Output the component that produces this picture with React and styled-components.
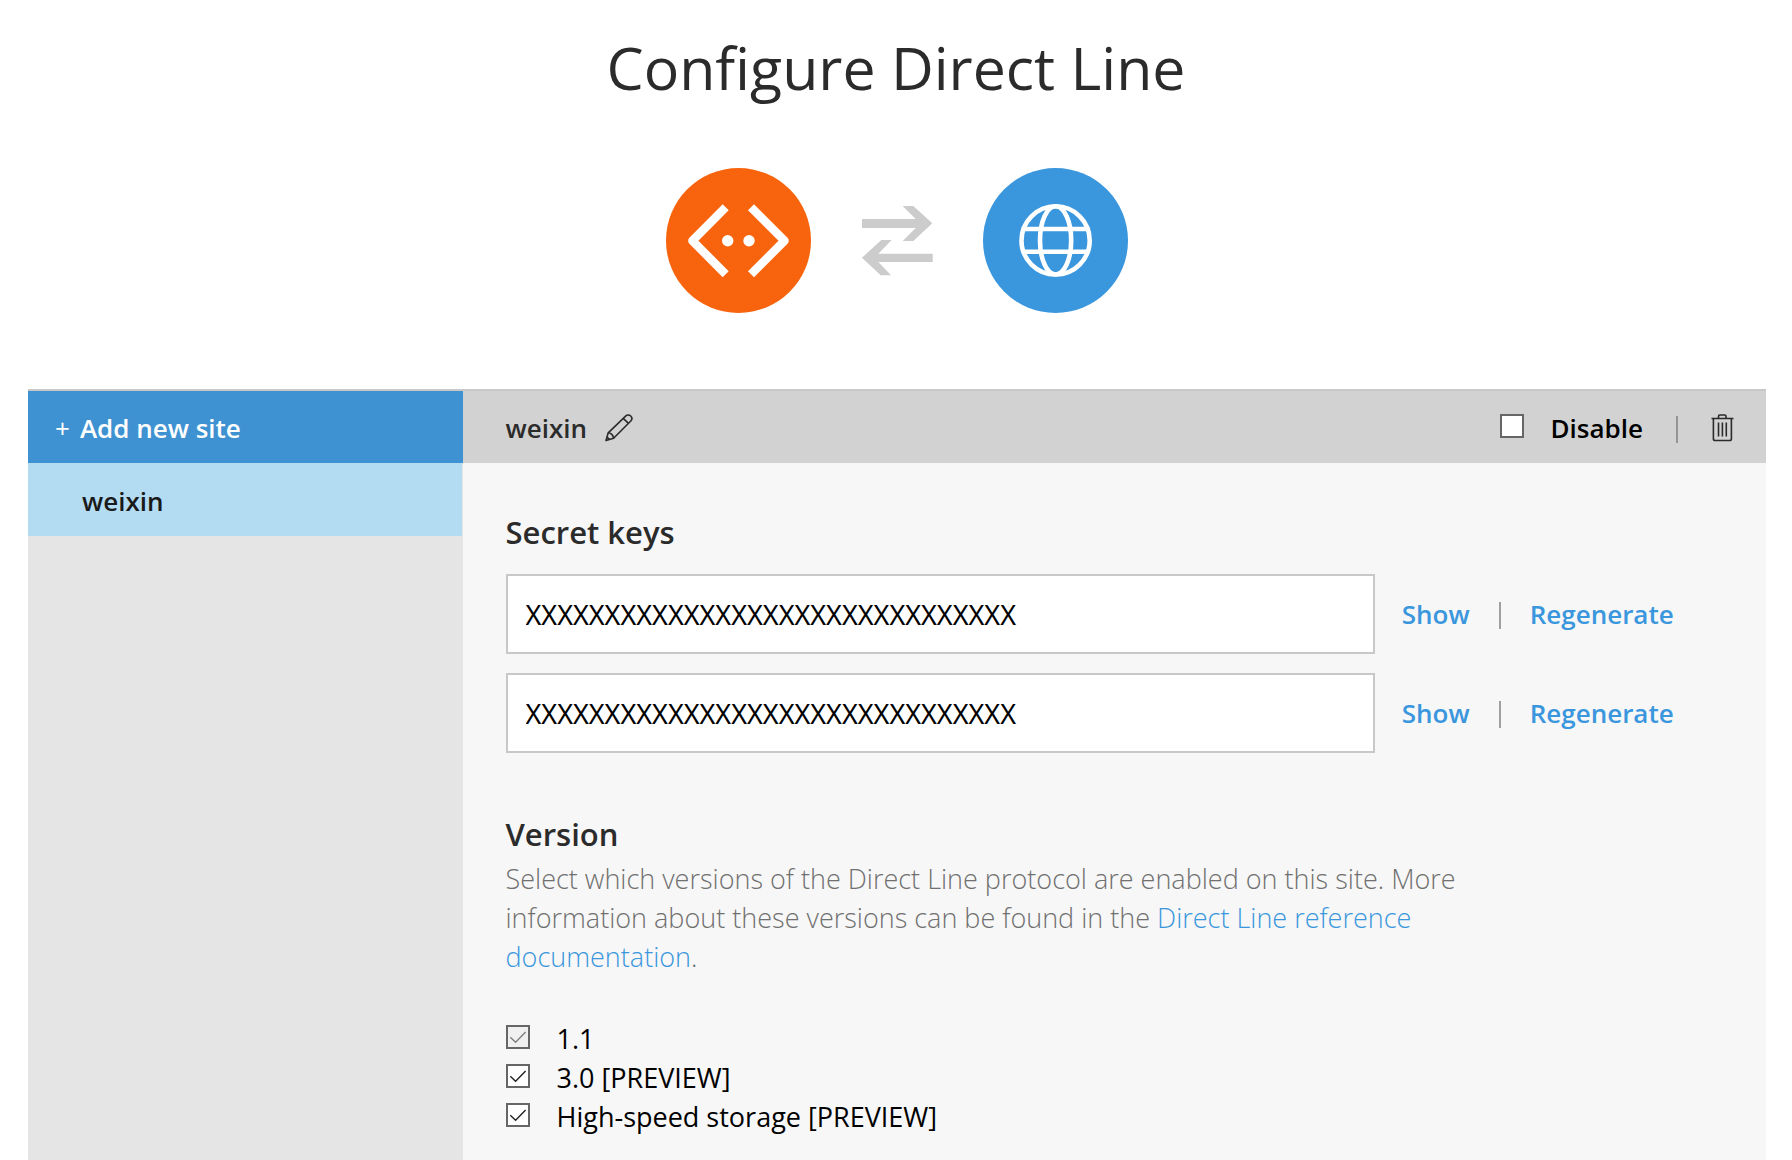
import React, { useState } from "react";
import styled, { createGlobalStyle } from "styled-components";

const GlobalStyle = createGlobalStyle`
  *, *::before, *::after { box-sizing: border-box; }
  body {
    margin: 0;
    background: #fff;
    color: #2b2b2b;
    font-family: "Open Sans", "Noto Sans", sans-serif;
    font-size: 27px;
    line-height: 39px;
  }
  button, input { font: inherit; color: inherit; }
`;

const Page = styled.main`
  display: flex;
  flex-direction: column;
  min-height: 100vh;
`;

const Title = styled.h1`
  margin: 25px 0 0;
  font-size: 59px;
  font-weight: 400;
  line-height: 84px;
  text-align: center;
`;

const Hero = styled.div`
  display: flex;
  justify-content: center;
  align-items: center;
  gap: 51px;
  margin: 59px 0 76px;
  padding-left: 2px;
  svg { display: block; }
`;

const Panel = styled.section`
  flex: 1;
  display: grid;
  grid-template-columns: 1fr 3fr;
  margin: 0 26px 0 28px;
  border-top: 2px solid #c8c8c8;
`;

const Sidebar = styled.nav`
  display: flex;
  flex-direction: column;
  background: #e5e5e5;
`;

const AddSite = styled.button`
  display: flex;
  align-items: center;
  gap: 10px;
  height: 72px;
  padding: 2px 28px 0 27px;
  border: 0;
  background: #3f92d2;
  color: #fff;
  font-size: 26px;
  font-weight: 600;
  cursor: pointer;
`;

const Plus = styled.span`
  font-weight: 400;
`;

const SiteLink = styled.a`
  display: flex;
  align-items: center;
  height: 73px;
  margin-right: 1px;
  padding: 3px 54px 0;
  background: #b3dcf2;
  color: #1a1a1a;
  font-size: 26px;
  font-weight: 600;
  text-decoration: none;
`;

const Content = styled.div`
  background: #f7f7f7;
`;

const Toolbar = styled.header`
  display: flex;
  align-items: center;
  height: 72px;
  padding: 2px 32px 0 43px;
  background: #d2d2d2;
`;

const SiteName = styled.h2`
  margin: 0 18px 0 0;
  font-size: 26px;
  font-weight: 600;
  line-height: 39px;
`;

const IconButton = styled.button`
  display: flex;
  padding: 0;
  border: 0;
  background: none;
  cursor: pointer;
`;

const ToolbarActions = styled.div`
  display: flex;
  align-items: center;
  margin-left: auto;
`;

const Divider = styled.span`
  width: 2px;
  height: 27px;
  margin: 3px ${(p) => p.$gap}px 0;
  background: ${(p) => p.$color || "#a0a0a0"};
`;

const Body = styled.div`
  padding: 46px 43px 18px;
`;

const SectionTitle = styled.h3`
  margin: 0;
  color: #2b2b2b;
  font-size: 31px;
  font-weight: 600;
  line-height: 46px;
`;

const KeyList = styled.div`
  display: grid;
  gap: 19px;
  margin: 19px 0 58px;
`;

const KeyRow = styled.div`
  display: flex;
  align-items: center;
`;

const KeyInput = styled.input`
  width: 71.4%;
  height: 80px;
  margin-right: 27px;
  padding: 0 18px;
  border: 2px solid #c8c8c8;
  border-radius: 0;
  background: #fff;
  color: #000;
  font-family: "Noto Sans", sans-serif;
`;

const TextButton = styled.button`
  padding: 0;
  border: 0;
  background: none;
  color: #3a96dd;
  font-size: 26px;
  font-weight: 600;
  cursor: pointer;
`;

const Note = styled.p`
  max-width: 980px;
  margin: 2px 0 43px;
  color: #707070;
  font-weight: 300;
`;

const DocLink = styled.a`
  color: #3a96dd;
  text-decoration: none;
`;

const Options = styled.div`
  display: flex;
  flex-direction: column;
  align-items: flex-start;
`;

const CheckLabel = styled.label`
  display: flex;
  align-items: center;
  gap: 27px;
  color: #000;
  font-size: ${(p) => (p.$strong ? 26 : 27)}px;
  font-weight: ${(p) => (p.$strong ? 600 : 400)};
`;

const Tick = styled.span`
  display: grid;
  width: 24px;
  height: 24px;
  margin-bottom: 4px;
  input, svg { grid-area: 1 / 1; }
  input {
    appearance: none;
    width: 24px;
    height: 24px;
    margin: 0;
    border: 2px solid #666;
    background: #fff;
  }
  input:disabled { background: #f0f0f0; }
  svg {
    visibility: hidden;
    pointer-events: none;
    stroke: #222;
  }
  input:checked + svg { visibility: visible; }
  input:disabled + svg { stroke: #808080; }
`;

function BotIcon() {
  return (
    <svg width="145" height="145" viewBox="0 0 145 145" aria-hidden="true">
      <circle cx="72.5" cy="72.5" r="72.5" fill="#f8640d" />
      <g fill="none" stroke="#fff" strokeWidth="8.5" strokeLinejoin="round">
        <path d="M59.7 39.3 26.4 72.7l33.3 33.6" />
        <path d="M85 39.3l33.5 33.4L85 106.3" />
      </g>
      <circle cx="61.7" cy="72.7" r="5.7" fill="#fff" />
      <circle cx="83" cy="72.7" r="5.7" fill="#fff" />
    </svg>
  );
}

function SwapIcon() {
  return (
    <svg width="70" height="70" viewBox="0 0 70 70" fill="#ccc" overflow="visible" aria-hidden="true">
      <path d="M0 13h53.7L40.7 0h10.6l19 17.3L51.3 35H40.7l13-13H0z" />
      <path d="M0 51.7 18.7 69.3H29L16.3 56h54.4v-8.3H16.3L29.7 34H19.3z" />
    </svg>
  );
}

function GlobeIcon() {
  return (
    <svg width="145" height="145" viewBox="0 0 145 145" aria-hidden="true">
      <circle cx="72.5" cy="72.5" r="72.5" fill="#3a96dd" />
      <g fill="none" stroke="#fff" strokeWidth="4.600">
        <circle cx="72.6" cy="72.4" r="34.1" />
        <ellipse cx="72.6" cy="72.4" rx="15.6" ry="34.1" />
        <path d="M41 61h63M41 83.8h63" />
      </g>
    </svg>
  );
}

function PencilIcon() {
  return (
    <svg width="28" height="28" viewBox="0 0 28 28" fill="none" stroke="#2b2b2b" strokeWidth="1.6" strokeLinejoin="round" aria-hidden="true">
      <path d="M1 26.5 3.2 18.8 20.6 2.1C22 .8 24.3.6 25.7 2s1.4 3.600.1 5L8.600 24.200z" />
      <path d="M18.200 4.400 23.500 9.400M3.200 18.800C5.800 18.800 8.400 21.200 8.600 24.200M2 23.200 4.400 25.400" />
    </svg>
  );
}

function TrashIcon() {
  return (
    <svg width="23" height="28" viewBox="0 0 23 28" fill="none" stroke="#2b2b2b" strokeWidth="1.600" aria-hidden="true">
      <path d="M.5 4.500h22M7.500 4.500V2.200Q7.500 1 8.700 1h5.100Q15 1 15 2.200v2.300" />
      <path d="M2.400 4.500v20.200Q2.400 26.500 4.200 26.500h14.400Q20.400 26.500 20.400 24.700V4.500M7.500 8.500v14M11.400 8.500v14M15.300 8.500v14" />
    </svg>
  );
}

function Check({ label, strong, ...rest }) {
  return (
    <CheckLabel $strong={strong}>
      <Tick>
        <input type="checkbox" {...rest} />
        <svg width="24" height="24" viewBox="0 0 24 24" fill="none" strokeWidth="1.400">
          <path d="M4.300 12.200 9.600 17.200 19.600 7" />
        </svg>
      </Tick>
      {label}
    </CheckLabel>
  );
}

const KEYS = ["Secret key 1", "Secret key 2"];

export default function App() {
  const [disabled, setDisabled] = useState(false);
  return (
    <Page>
      <GlobalStyle />
      <Title>Configure Direct Line</Title>
      <Hero>
        <BotIcon />
        <SwapIcon />
        <GlobeIcon />
      </Hero>
      <Panel>
        <Sidebar>
          <AddSite type="button">
            <Plus>+</Plus>
            Add new site
          </AddSite>
          <SiteLink href="#weixin">weixin</SiteLink>
        </Sidebar>
        <Content>
          <Toolbar>
            <SiteName>weixin</SiteName>
            <IconButton type="button" aria-label="Rename site">
              <PencilIcon />
            </IconButton>
            <ToolbarActions>
              <Check
                strong
                label="Disable"
                checked={disabled}
                onChange={(e) => setDisabled(e.target.checked)}
              />
              <Divider $gap={33} $color="#949494" />
              <IconButton type="button" aria-label="Delete site">
                <TrashIcon />
              </IconButton>
            </ToolbarActions>
          </Toolbar>
          <Body>
            <SectionTitle>Secret keys</SectionTitle>
            <KeyList>
              {KEYS.map((name) => (
                <KeyRow key={name}>
                  <KeyInput aria-label={name} readOnly value={"X".repeat(31)} />
                  <TextButton type="button">Show</TextButton>
                  <Divider $gap={29} />
                  <TextButton type="button">Regenerate</TextButton>
                </KeyRow>
              ))}
            </KeyList>
            <SectionTitle>Version</SectionTitle>
            <Note>
              Select which versions of the Direct Line protocol are enabled on this site. More
              information about these versions can be found in the{" "}
              <DocLink href="#reference">Direct Line reference documentation</DocLink>.
            </Note>
            <Options>
              <Check label="1.1" defaultChecked disabled />
              <Check label="3.0 [PREVIEW]" defaultChecked />
              <Check label="High-speed storage [PREVIEW]" defaultChecked />
            </Options>
          </Body>
        </Content>
      </Panel>
    </Page>
  );
}
